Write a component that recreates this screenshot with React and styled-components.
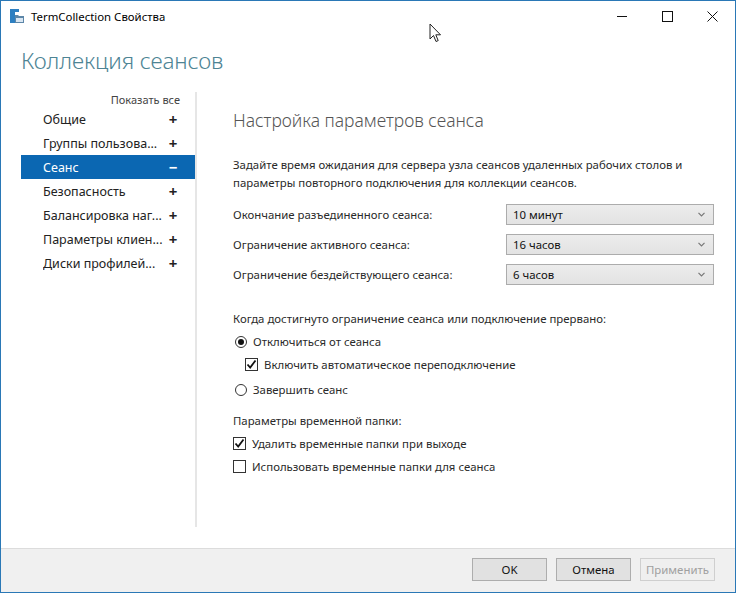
import React from "react";
import styled, { createGlobalStyle } from "styled-components";

const Global = createGlobalStyle`
  html, body { margin: 0; padding: 0; background: #fff; }
  body { font-family: "Noto Sans", "Open Sans", sans-serif; }
  * { box-sizing: border-box; }
`;

const Window = styled.div`
  position: relative;
  width: 736px;
  height: 593px;
  border: 1px solid #2a78b6;
  display: flex;
  flex-direction: column;
  background: #fff;
  color: #1e1e1e;
  overflow: hidden;
`;

const TitleBar = styled.div`
  height: 30px;
  display: flex;
  align-items: center;
  padding-left: 8px;
  flex: none;
`;

const TitleText = styled.span`
  font-size: 11.4px;
  margin-left: 6px;
  color: #000;
`;

const Controls = styled.div`
  margin-left: auto;
  display: flex;
  height: 100%;
`;

const CtrlBtn = styled.div`
  width: 45px;
  height: 100%;
  display: flex;
  align-items: center;
  justify-content: center;
`;

const Body = styled.div`
  flex: 1;
  display: flex;
  flex-direction: column;
  min-height: 0;
`;

const Header = styled.h1`
  margin: 15px 0 0 20px;
  font-size: 22.5px;
  font-weight: 300;
  color: #4d8494;
  line-height: 30px;
  letter-spacing: -0.1px;
`;

const Main = styled.div`
  display: flex;
  flex: 1;
  margin-top: 16px;
  padding-bottom: 21px;
`;

const Sidebar = styled.div`
  width: 174px;
  margin-left: 20px;
  display: flex;
  flex-direction: column;
`;

const ShowAll = styled.div`
  font-size: 11px;
  color: #444;
  text-align: right;
  line-height: 15px;
  padding-right: 15px;
`;

const NavItem = styled.div`
  height: 24px;
  display: flex;
  align-items: center;
  padding-left: 22px;
  padding-right: 17px;
  font-size: 12.5px;
  background: ${(p) => (p.$active ? "#0b67b2" : "transparent")};
  color: ${(p) => (p.$active ? "#fff" : "#222")};
  white-space: nowrap;
`;

const NavLabel = styled.span`
  flex: 1;
  overflow: hidden;
`;

const NavSign = styled.span`
  width: 10px;
  font-size: 15px;
  font-weight: 700;
  text-align: center;
`;

const Separator = styled.div`
  width: 2px;
  background: #e6e6e6;
  flex: none;
`;

const Content = styled.div`
  flex: 1;
  padding-left: 36px;
  padding-right: 21px;
  display: flex;
  flex-direction: column;
`;

const SectionTitle = styled.h2`
  margin: 16px 0 0 0;
  font-size: 17.5px;
  font-weight: 300;
  color: #555;
  line-height: 24px;
`;

const Description = styled.p`
  margin: 24px 0 0 0;
  font-size: 11.4px;
  line-height: 17.5px;
  color: #2a2a2a;
`;

const Rows = styled.div`
  margin-top: 13px;
  display: flex;
  flex-direction: column;
  gap: 9px;
`;

const Row = styled.div`
  display: flex;
  align-items: center;
  justify-content: space-between;
  font-size: 11.4px;
  color: #2a2a2a;
`;

const Select = styled.div`
  width: 208px;
  height: 21px;
  border: 1px solid #acacac;
  background: linear-gradient(#ececec, #e3e3e3);
  display: flex;
  align-items: center;
  padding: 0 8px 0 6px;
  font-size: 11.4px;
  color: #111;
`;

const SelectValue = styled.span`
  flex: 1;
`;

const Group = styled.div`
  margin-top: ${(p) => p.$mt || 0}px;
  display: flex;
  flex-direction: column;
`;

const GroupLabel = styled.div`
  font-size: 11.4px;
  color: #2a2a2a;
  line-height: 17px;
`;

const Option = styled.label`
  display: flex;
  align-items: center;
  height: 17px;
  margin-top: ${(p) => p.$mt || 0}px;
  padding-left: ${(p) => p.$indent || 0}px;
  font-size: 11.4px;
  color: #2a2a2a;
  gap: 6px;
`;

const Radio = styled.span`
  width: 12px;
  height: 12px;
  border: 1px solid #333;
  border-radius: 50%;
  display: flex;
  align-items: center;
  justify-content: center;
  background: #fff;
  &::after {
    content: "";
    width: 6px;
    height: 6px;
    border-radius: 50%;
    background: ${(p) => (p.$on ? "#111" : "transparent")};
  }
`;

const Box = styled.span`
  width: 13px;
  height: 13px;
  border: 1px solid #333;
  background: #fff;
  display: flex;
  align-items: center;
  justify-content: center;
`;

const Footer = styled.div`
  height: 44px;
  flex: none;
  background: #f0f0f0;
  border-top: 1px solid #dcdcdc;
  display: flex;
  align-items: center;
  justify-content: flex-end;
  gap: 9px;
  padding-right: 20px;
  padding-bottom: 2px;
`;

const Button = styled.div`
  width: 75px;
  height: 23px;
  border: 1px solid ${(p) => (p.$disabled ? "#cfcfcf" : "#adadad")};
  background: ${(p) => (p.$disabled ? "#efefef" : "#e1e1e1")};
  color: ${(p) => (p.$disabled ? "#a0a0a0" : "#111")};
  font-size: 11.4px;
  display: flex;
  align-items: center;
  justify-content: center;
`;

const Cursor = styled.svg`
  position: absolute;
  left: 428px;
  top: 22px;
`;

const Check = () => (
  <svg width="11" height="11" viewBox="0 0 11 11">
    <path d="M1.5 5.5 L4.2 8.5 L9.5 1.5" fill="none" stroke="#111" strokeWidth="1.8" />
  </svg>
);

const Chevron = () => (
  <svg width="7" height="5" viewBox="0 0 7 5">
    <path d="M0.5 0.8 L3.5 3.8 L6.5 0.8" fill="none" stroke="#777" strokeWidth="1.2" />
  </svg>
);

const AppIcon = () => (
  <svg width="16" height="16" viewBox="0 0 16 16">
    <rect x="1" y="1" width="5" height="14" fill="#2d7fc1" />
    <rect x="1" y="1" width="9" height="3" fill="#2d7fc1" />
    <path d="M6 7 h3 l1 1 h5 v7 h-9 z" fill="#5c86a8" />
    <rect x="7" y="10" width="7" height="4" fill="#d9e6f2" />
  </svg>
);

const WinIcons = {
  min: (
    <svg width="11" height="11" viewBox="0 0 11 11">
      <path d="M0 5.5 H10" stroke="#111" strokeWidth="1" />
    </svg>
  ),
  max: (
    <svg width="11" height="11" viewBox="0 0 11 11">
      <rect x="0.5" y="0.5" width="10" height="10" fill="none" stroke="#111" strokeWidth="1" />
    </svg>
  ),
  close: (
    <svg width="11" height="11" viewBox="0 0 11 11">
      <path d="M0.5 0.5 L10.5 10.5 M10.5 0.5 L0.5 10.5" stroke="#111" strokeWidth="1" />
    </svg>
  ),
};

const navItems = [
  { label: "Общие" },
  { label: "Группы пользова..." },
  { label: "Сеанс", active: true },
  { label: "Безопасность" },
  { label: "Балансировка наг..." },
  { label: "Параметры клиен..." },
  { label: "Диски профилей..." },
];

const rows = [
  { label: "Окончание разъединенного сеанса:", value: "10 минут" },
  { label: "Ограничение активного сеанса:", value: "16 часов" },
  { label: "Ограничение бездействующего сеанса:", value: "6 часов" },
];

export default function App() {
  return (
    <Window>
      <Global />
      <TitleBar>
        <AppIcon />
        <TitleText>TermCollection Свойства</TitleText>
        <Controls>
          <CtrlBtn>{WinIcons.min}</CtrlBtn>
          <CtrlBtn>{WinIcons.max}</CtrlBtn>
          <CtrlBtn>{WinIcons.close}</CtrlBtn>
        </Controls>
      </TitleBar>
      <Body>
        <Header>Коллекция сеансов</Header>
        <Main>
          <Sidebar>
            <ShowAll>Показать все</ShowAll>
            {navItems.map((n) => (
              <NavItem key={n.label} $active={n.active}>
                <NavLabel>{n.label}</NavLabel>
                <NavSign>{n.active ? "−" : "+"}</NavSign>
              </NavItem>
            ))}
          </Sidebar>
          <Separator />
          <Content>
            <SectionTitle>Настройка параметров сеанса</SectionTitle>
            <Description>
              Задайте время ожидания для сервера узла сеансов удаленных рабочих столов и
              <br />
              параметры повторного подключения для коллекции сеансов.
            </Description>
            <Rows>
              {rows.map((r) => (
                <Row key={r.label}>
                  <span>{r.label}</span>
                  <Select>
                    <SelectValue>{r.value}</SelectValue>
                    <Chevron />
                  </Select>
                </Row>
              ))}
            </Rows>
            <Group $mt={25}>
              <GroupLabel>Когда достигнуто ограничение сеанса или подключение прервано:</GroupLabel>
              <Option $mt={6} $indent={2}>
                <Radio $on />
                Отключиться от сеанса
              </Option>
              <Option $mt={6} $indent={12}>
                <Box><Check /></Box>
                Включить автоматическое переподключение
              </Option>
              <Option $mt={8} $indent={2}>
                <Radio />
                Завершить сеанс
              </Option>
            </Group>
            <Group $mt={14}>
              <GroupLabel>Параметры временной папки:</GroupLabel>
              <Option $mt={6}>
                <Box><Check /></Box>
                Удалить временные папки при выходе
              </Option>
              <Option $mt={6}>
                <Box />
                Использовать временные папки для сеанса
              </Option>
            </Group>
          </Content>
        </Main>
      </Body>
      <Footer>
        <Button>OK</Button>
        <Button>Отмена</Button>
        <Button $disabled>Применить</Button>
      </Footer>
      <Cursor width="13" height="20" viewBox="0 0 13 20">
        <path d="M1 1 L1 16 L4.5 12.5 L7 18.5 L9.2 17.6 L6.8 11.8 L11.5 11.8 Z" fill="#fff" stroke="#222" strokeWidth="1" strokeLinejoin="round" />
      </Cursor>
    </Window>
  );
}
